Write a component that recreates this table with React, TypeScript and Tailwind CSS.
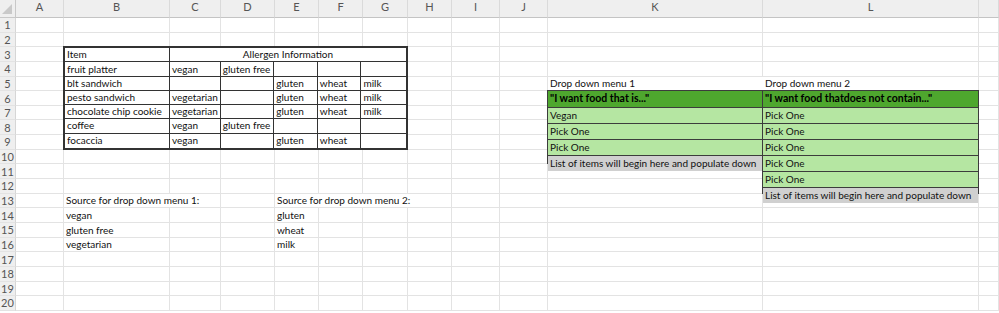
import React from 'react';

const COLS = ['A', 'B', 'C', 'D', 'E', 'F', 'G', 'H', 'I', 'J', 'K', 'L', ''];
const ROWS = Array.from({ length: 20 }, (_, i) => i + 1);

// explicit grid placement so overlays don't push the gridline cells around
const COL_START = [
  'col-start-1', 'col-start-2', 'col-start-3', 'col-start-4', 'col-start-5', 'col-start-6', 'col-start-7',
  'col-start-8', 'col-start-9', 'col-start-10', 'col-start-11', 'col-start-12', 'col-start-13', 'col-start-14',
];
const ROW_START = [
  'row-start-1', 'row-start-2', 'row-start-3', 'row-start-4', 'row-start-5', 'row-start-6', 'row-start-7',
  'row-start-8', 'row-start-9', 'row-start-10', 'row-start-11', 'row-start-12', 'row-start-13', 'row-start-14',
  'row-start-15', 'row-start-16', 'row-start-17', 'row-start-18', 'row-start-19', 'row-start-20', 'row-start-21',
];

const allergens = [
  ['fruit platter', 'vegan', 'gluten free', '', '', ''],
  ['blt sandwich', '', '', 'gluten', 'wheat', 'milk'],
  ['pesto sandwich', 'vegetarian', '', 'gluten', 'wheat', 'milk'],
  ['chocolate chip cookie', 'vegetarian', '', 'gluten', 'wheat', 'milk'],
  ['coffee', 'vegan', 'gluten free', '', '', ''],
  ['focaccia', 'vegan', '', 'gluten', 'wheat', ''],
];

function Corner() {
  return (
    <div className="col-start-1 row-start-1 relative bg-[#efefef] border-r border-b border-[#c8c8c8]">
      <svg width="11" height="11" viewBox="0 0 11 11" className="absolute right-[2px] bottom-[2px]">
        <polygon points="10,0 10,10 0,10" fill="#c9c9c9" />
      </svg>
    </div>
  );
}

type DropCell = { text: string; kind: 'head' | 'pick' | 'list' };

function DropGroup({ cells, className }: { cells: DropCell[]; className: string }) {
  return (
    <div className={`${className} -ml-px -mt-px flex flex-col border border-[#3c3c3c]`}>
      {cells.map((c, i) => (
        <div
          key={i}
          className={`flex-1 flex items-center px-[2px] whitespace-nowrap ${i < cells.length - 1 ? 'border-b border-[#3c3c3c]' : ''} ${
            c.kind === 'head'
              ? 'bg-[#4ea72e] font-bold text-[10.5px] text-black'
              : c.kind === 'pick'
                ? 'bg-[#b5e6a2]'
                : 'bg-[#d0d0d0]'
          }`}
        >
          {c.text}
        </div>
      ))}
    </div>
  );
}

export default function App() {
  return (
    <div className="w-[999px] h-[313px] overflow-hidden bg-white text-[10px] text-[#111] font-[family-name:Lato,sans-serif]">
      <div className="grid grid-cols-[16px_48px_106px_51px_54px_44px_44px_45px_44px_48px_48px_215px_216px_1fr] grid-rows-[18px_repeat(20,14.65px)]">
        {/* column headers */}
        <Corner />
        {COLS.map((c, i) => (
          <div
            key={c + i}
            className={`${COL_START[i + 1]} row-start-1 bg-[#efefef] border-b border-[#c4c4c4] border-r border-r-[#dadada] flex items-end justify-center pb-[2px] text-[11px] text-[#555]`}
          >
            {c}
          </div>
        ))}

        {/* row numbers + gridlines */}
        {ROWS.map((r) => (
          <React.Fragment key={r}>
            <div
              className={`col-start-1 ${ROW_START[r]} bg-[#efefef] border-r border-[#d6d6d6] border-b border-b-[#e3e3e3] flex items-center justify-center text-[11px] text-[#555] leading-none`}
            >
              {r}
            </div>
            {COLS.map((c, i) => (
              <div key={c + i} className={`${COL_START[i + 1]} ${ROW_START[r]} border-r border-b border-[#e3e3e3]`} />
            ))}
          </React.Fragment>
        ))}

        {/* allergen table, B3:G9 */}
        <div className="col-start-3 col-end-9 row-start-4 row-end-11 -ml-px -mt-px grid grid-cols-[106fr_51fr_54fr_44fr_44fr_45fr] grid-rows-7 border-2 border-[#333] bg-white">
          <div className="border-r border-b border-[#333] flex items-center px-[2px]">Item</div>
          <div className="col-span-5 border-b border-[#333] flex items-center justify-center">Allergen Information</div>
          {allergens.map((row, ri) =>
            row.map((v, ci) => (
              <div
                key={`${ri}-${ci}`}
                className={`flex items-center px-[2px] whitespace-nowrap ${ci < 5 ? 'border-r border-[#333]' : ''} ${
                  ri < 5 ? 'border-b border-[#333]' : ''
                }`}
              >
                {v}
              </div>
            ))
          )}
        </div>

        {/* drop down 1 */}
        <div className="col-start-12 row-start-6 flex items-center px-[2px] bg-white">Drop down menu 1</div>
        <DropGroup
          className="col-start-12 row-start-7 row-end-12"
          cells={[
            { text: '"I want food that is..."', kind: 'head' },
            { text: 'Vegan', kind: 'pick' },
            { text: 'Pick One', kind: 'pick' },
            { text: 'Pick One', kind: 'pick' },
            { text: 'List of items will begin here and populate down', kind: 'list' },
          ]}
        />

        {/* drop down 2 */}
        <div className="col-start-13 row-start-6 flex items-center px-[2px]">Drop down menu 2</div>
        <DropGroup
          className="col-start-13 row-start-7 row-end-14"
          cells={[
            { text: '"I want food thatdoes not contain..."', kind: 'head' },
            { text: 'Pick One', kind: 'pick' },
            { text: 'Pick One', kind: 'pick' },
            { text: 'Pick One', kind: 'pick' },
            { text: 'Pick One', kind: 'pick' },
            { text: 'Pick One', kind: 'pick' },
            { text: 'List of items will begin here and populate down', kind: 'list' },
          ]}
        />

        {/* sources */}
        <div className="col-start-3 col-end-5 row-start-14 bg-white border-r border-b border-[#e3e3e3] flex items-center px-[2px] whitespace-nowrap">
          Source for drop down menu 1:
        </div>
        <div className="col-start-3 row-start-15 flex items-center px-[2px]">vegan</div>
        <div className="col-start-3 row-start-16 flex items-center px-[2px]">gluten free</div>
        <div className="col-start-3 row-start-17 flex items-center px-[2px]">vegetarian</div>

        <div className="col-start-6 col-end-10 row-start-14 bg-white border-r border-b border-[#e3e3e3] flex items-center px-[2px] whitespace-nowrap">
          Source for drop down menu 2:
        </div>
        <div className="col-start-6 row-start-15 flex items-center px-[2px]">gluten</div>
        <div className="col-start-6 row-start-16 flex items-center px-[2px]">wheat</div>
        <div className="col-start-6 row-start-17 flex items-center px-[2px]">milk</div>
      </div>
    </div>
  );
}
